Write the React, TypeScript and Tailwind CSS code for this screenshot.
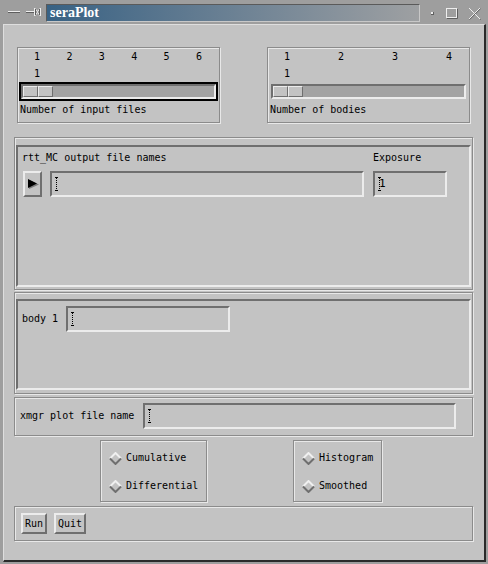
import React from 'react';

const sunken =
  'border-2 border-t-[#6f6f6f] border-l-[#6f6f6f] border-b-[#ececec] border-r-[#ececec]';
const raised =
  'border-2 border-t-[#ececec] border-l-[#ececec] border-b-[#6f6f6f] border-r-[#6f6f6f]';
const etched =
  'border border-[#8b8b8b] shadow-[inset_1px_1px_0_#e8e8e8,1px_1px_0_#e8e8e8]';

function Cursor() {
  return (
    <svg width="5" height="14" viewBox="0 0 5 14" className="shrink-0">
      <path d="M1 0.5H4M1 13.5H4" stroke="#000" strokeWidth="1" />
      <path d="M2.5 1V13" stroke="#000" strokeWidth="1" strokeDasharray="1 1" />
    </svg>
  );
}

function Entry({ className, children }: { className: string; children?: React.ReactNode }) {
  return (
    <div className={`${sunken} ${className} h-[26px] flex items-center pl-[2px]`}>
      {children ?? <Cursor />}
    </div>
  );
}

function Button({ label, className }: { label: string; className: string }) {
  return (
    <div className={`${raised} ${className} h-[21px] flex items-center justify-center`}>
      {label}
    </div>
  );
}

function Diamond() {
  return (
    <svg width="13" height="13" viewBox="0 0 13 13" className="shrink-0">
      <polygon points="6.5,1 12,6.5 6.5,12 1,6.5" fill="#c3c3c3" />
      <polyline points="1,6.5 6.5,1 12,6.5" stroke="#f0f0f0" strokeWidth="2" fill="none" />
      <polyline points="1,6.5 6.5,12 12,6.5" stroke="#6f6f6f" strokeWidth="2" fill="none" />
    </svg>
  );
}

function Scale({ ticks, label, focused }: { ticks: string[]; label: string; focused: boolean }) {
  return (
    <div className={`${etched} w-[203px] h-[76px] flex flex-col`}>
      <div className="ml-[14px] w-[172px] mt-[3px] flex justify-between">
        {ticks.map((t) => (
          <span key={t} className="w-[10px] text-center">
            {t}
          </span>
        ))}
      </div>
      <div className="ml-[14px] w-[10px] mt-[5px] text-center">1</div>
      <div
        className={`mx-[1px] mt-[2px] border-2 ${focused ? 'border-black' : 'border-[#c3c3c3]'}`}
      >
        <div className={`${sunken} h-[15px] bg-[#a3a3a3] flex`}>
          <div className="w-[30px] h-[11px] flex">
            <div className="flex-1 border border-t-[#ececec] border-l-[#ececec] border-b-[#6f6f6f] border-r-[#6f6f6f] bg-[#c3c3c3]" />
            <div className="flex-1 border border-t-[#ececec] border-l-[#ececec] border-b-[#6f6f6f] border-r-[#6f6f6f] bg-[#c3c3c3]" />
          </div>
        </div>
      </div>
      <div className="ml-[2px] mt-[3px]">{label}</div>
    </div>
  );
}

function RadioItem({ label }: { label: string }) {
  return (
    <div className="h-[28px] flex items-center gap-[4px]">
      <Diamond />
      <span>{label}</span>
    </div>
  );
}

export default function App() {
  return (
    <div className="w-[488px] h-[564px] bg-[#9e9e9e] overflow-hidden font-['DejaVu_Sans_Mono',monospace] text-[10px] leading-[12px] text-black">
      {/* Title bar */}
      <div className="h-[24px] flex items-start">
        <svg width="12" height="4" viewBox="0 0 12 4" className="ml-[8px] mt-[11px]">
          <path d="M0 0.5H12" stroke="#eeeeee" />
          <path d="M0 1.5H12" stroke="#5e5e5e" />
        </svg>
        <svg width="15" height="10" viewBox="0 0 15 10" className="ml-[6px] mt-[7px]">
          <path d="M0 4.5H8" stroke="#eeeeee" />
          <path d="M0 5.5H8" stroke="#5e5e5e" />
          <path d="M8.5 1V9M14.5 1V9M8.5 1L11.5 4.5L14.5 1M8.5 9L11.5 5.5L14.5 9" stroke="#eeeeee" fill="none" />
          <path d="M9.5 2V8M13.5 2V8" stroke="#5e5e5e" />
        </svg>
        <div className="ml-[5px] mt-[4px] w-[374px] h-[18px] border border-t-[#5a5a5a] border-l-[#5a5a5a] border-b-[#c8c8c8] border-r-[#c8c8c8] bg-gradient-to-r from-[#386284] to-[#9ea0a2] flex items-center pl-[3px]">
          <span className="font-['Liberation_Serif',serif] font-bold text-[14px] leading-[16px] text-white">
            seraPlot
          </span>
        </div>
        <svg width="3" height="3" viewBox="0 0 3 3" className="ml-[11px] mt-[12px]">
          <rect x="0" y="0" width="2" height="2" fill="#eeeeee" />
          <path d="M2.5 0V3M0 2.5H3" stroke="#5e5e5e" />
        </svg>
        <svg width="12" height="11" viewBox="0 0 12 11" className="ml-[12px] mt-[8px]">
          <rect x="0.5" y="0.5" width="10" height="9" stroke="#eeeeee" fill="none" />
          <path d="M11.5 1V10.5H1" stroke="#5e5e5e" fill="none" />
        </svg>
        <svg width="13" height="13" viewBox="0 0 13 13" className="ml-[10px] mt-[7px]">
          <path d="M1 1L12 12M12 1L1 12" stroke="#5e5e5e" strokeWidth="1" transform="translate(0.6 0.6)" />
          <path d="M1 1L12 12M12 1L1 12" stroke="#eeeeee" strokeWidth="1" />
        </svg>
      </div>

      {/* Window body */}
      <div className="ml-[3px] w-[483px] h-[538px] bg-[#c3c3c3] border-t border-l border-t-[#dedede] border-l-[#dedede] border-r-2 border-b-2 border-r-[#2a2a2a] border-b-[#2a2a2a] flex flex-col">
        {/* Scales */}
        <div className="mt-[22px] ml-[13px] flex gap-[47px]">
          <Scale ticks={['1', '2', '3', '4', '5', '6']} label="Number of input files" focused />
          <Scale ticks={['1', '2', '3', '4']} label="Number of bodies" focused={false} />
        </div>

        {/* rtt_MC files */}
        <div className={`${etched} mt-[14px] ml-[10px] w-[459px] h-[153px] flex flex-col pt-[7px] pb-[2px] px-[1px]`}>
          <div className={`${sunken} flex-1 flex pl-[4px] pt-[5px]`}>
            <div className="flex flex-col">
              <span>rtt_MC output file names</span>
              <div className="mt-[7px] flex">
                <div className={`${raised} ml-[1px] w-[19px] h-[26px] flex items-center justify-center`}>
                  <svg width="12" height="12" viewBox="0 0 12 12">
                    <polygon points="2,2 12,6.5 2,11" fill="#7a7a7a" />
                    <polygon points="1,1 10,5.5 1,10" fill="#000" />
                  </svg>
                </div>
                <Entry className="ml-[8px] w-[314px]" />
              </div>
            </div>
            <div className="ml-[9px] flex flex-col">
              <span>Exposure</span>
              <Entry className="mt-[7px] w-[74px]">
                <div className="flex items-center">
                  <Cursor />
                  <span className="-ml-[3px] text-[11px]">1</span>
                </div>
              </Entry>
            </div>
          </div>
        </div>

        {/* body */}
        <div className={`${etched} mt-[2px] ml-[10px] w-[459px] h-[102px] flex flex-col pt-[6px] pb-[3px] px-[1px]`}>
          <div className={`${sunken} flex-1 flex items-start pl-[4px] pt-[5px]`}>
            <div className="flex items-center gap-[8px]">
              <span>body 1</span>
              <Entry className="w-[164px]" />
            </div>
          </div>
        </div>

        {/* xmgr */}
        <div className={`${etched} mt-[3px] ml-[10px] w-[459px] h-[39px] flex items-start pl-[5px] pt-[5px]`}>
          <div className="flex items-center gap-[9px]">
            <span>xmgr plot file name</span>
            <Entry className="w-[313px]" />
          </div>
        </div>

        {/* radio groups */}
        <div className="mt-[4px] ml-[96px] flex gap-[86px]">
          <div className={`${etched} w-[107px] h-[62px] pl-[8px] pt-[3px] flex flex-col`}>
            <RadioItem label="Cumulative" />
            <RadioItem label="Differential" />
          </div>
          <div className={`${etched} w-[89px] h-[62px] pl-[8px] pt-[3px] flex flex-col`}>
            <RadioItem label="Histogram" />
            <RadioItem label="Smoothed" />
          </div>
        </div>

        {/* buttons */}
        <div className={`${etched} mt-[4px] ml-[10px] w-[459px] h-[35px] flex items-start pl-[6px] pt-[6px] gap-[7px]`}>
          <Button label="Run" className="w-[26px]" />
          <Button label="Quit" className="w-[32px]" />
        </div>
      </div>
    </div>
  );
}
